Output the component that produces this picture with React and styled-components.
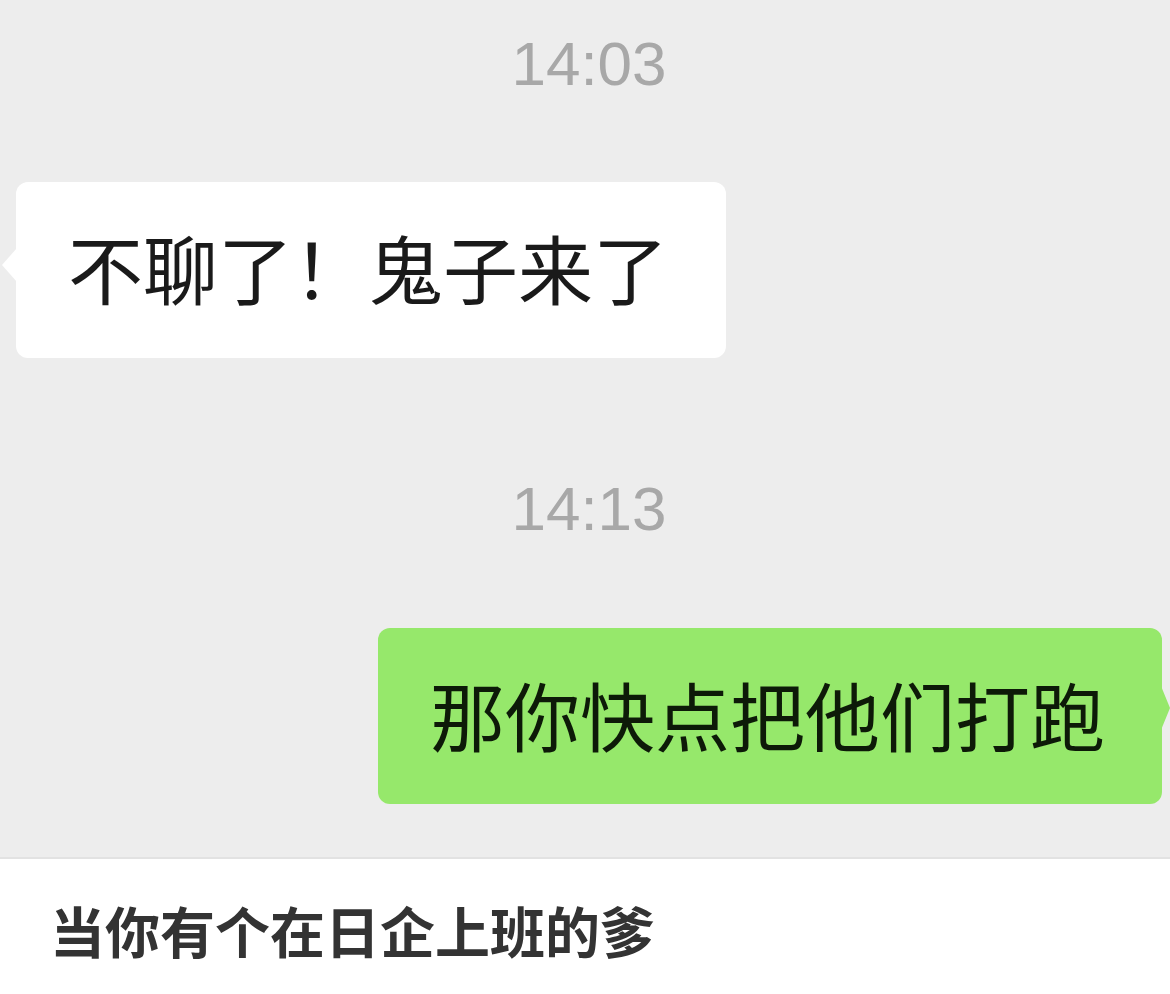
import React from 'react';
import styled, { createGlobalStyle } from 'styled-components';

const GlobalStyle = createGlobalStyle`
    html, body {
        margin: 0;
        padding: 0;
        background: #ffffff;
    }
    body {
        font-family: "Noto Sans CJK SC", "Noto Sans", sans-serif;
    }
`;

const Page = styled.div`
    width: 1170px;
    height: 994px;
    display: flex;
    flex-direction: column;
    overflow: hidden;
`;

const Chat = styled.div`
    height: 857px;
    background: #ededed;
    display: flex;
    flex-direction: column;
    padding-top: 32px;
    box-sizing: border-box;
`;

const Time = styled.div`
    font-family: "Liberation Sans", Arial, sans-serif;
    font-size: 62px;
    line-height: 63px;
    height: 63px;
    color: #a8a8a8;
    text-align: center;
    padding-left: 8px;
    margin-bottom: ${props => props.gap}px;
`;

const Row = styled.div`
    display: flex;
    justify-content: ${props => (props.mine ? 'flex-end' : 'flex-start')};
    padding: ${props => (props.mine ? '0 8px 0 0' : '0 0 0 16px')};
    margin-bottom: ${props => props.gap}px;
`;

const Bubble = styled.div`
    position: relative;
    height: 176px;
    box-sizing: border-box;
    display: flex;
    align-items: center;
    padding: ${props => (props.mine ? '0 57px 6px 52px' : '0 58px 8px 52px')};
    border-radius: 12px;
    background: ${props => (props.mine ? '#96e86b' : '#ffffff')};
    color: ${props => (props.mine ? '#0d1a08' : '#1a1a1a')};
    font-size: 75px;
    line-height: 1;
    white-space: nowrap;

    &::after {
        content: '';
        position: absolute;
        top: ${props => (props.mine ? '58px' : '66px')};
        ${props => (props.mine ? 'right: -8px;' : 'left: -14px;')}
        border-style: solid;
        border-color: transparent;
        border-width: ${props => (props.mine ? '22px' : '17px')} 0 ${props => (props.mine ? '22px' : '17px')} 0;
        ${props => (props.mine
            ? 'border-left: 9px solid #96e86b;'
            : 'border-right: 15px solid #ffffff;')}
    }
`;

const Caption = styled.div`
    flex: 1;
    background: #ffffff;
    border-top: 2px solid #e2e2e2;
    display: flex;
    align-items: center;
    padding: 4px 0 0 50px;
    font-size: 55px;
    font-weight: 700;
    color: #333333;
`;

const App = () => (
    <>
        <GlobalStyle />
        <Page>
            <Chat>
                <Time gap={87}>14:03</Time>
                <Row gap={119}>
                    <Bubble>不聊了！鬼子来了</Bubble>
                </Row>
                <Time gap={88}>14:13</Time>
                <Row mine>
                    <Bubble mine>那你快点把他们打跑</Bubble>
                </Row>
            </Chat>
            <Caption>当你有个在日企上班的爹</Caption>
        </Page>
    </>
);

export default App;
